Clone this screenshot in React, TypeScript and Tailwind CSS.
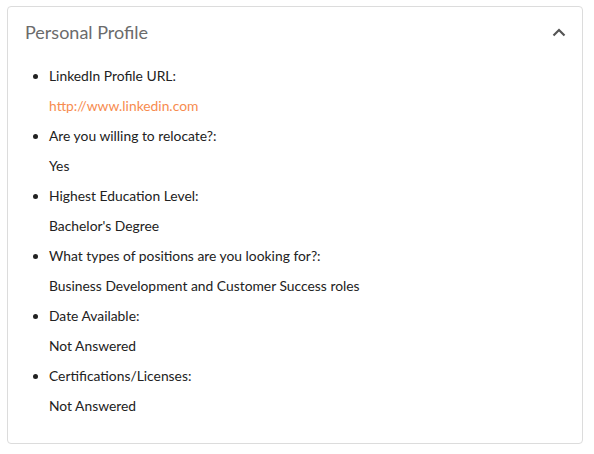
import React, { useState } from 'react';

const items: { label: string; value: string; link?: boolean }[] = [
  { label: 'LinkedIn Profile URL:', value: 'http://www.linkedin.com', link: true },
  { label: 'Are you willing to relocate?:', value: 'Yes' },
  { label: 'Highest Education Level:', value: "Bachelor's Degree" },
  { label: 'What types of positions are you looking for?:', value: 'Business Development and Customer Success roles' },
  { label: 'Date Available:', value: 'Not Answered' },
  { label: 'Certifications/Licenses:', value: 'Not Answered' },
];

const App: React.FC = () => {
  const [open, setOpen] = useState(true);

  return (
    <div className="min-h-screen bg-white pt-[6px] pl-[7px] pr-[11px] font-['Lato','Liberation_Sans',sans-serif]">
      <div className="rounded-[4px] border border-[#dcdcdc] bg-white">
        {/* Header */}
        <div className="flex items-center justify-between pl-[17px] pr-[16px] pt-[13px]">
          <h2 className="text-[18px] leading-[24px] text-[#6b6b6b]">Personal Profile</h2>
          <button onClick={() => setOpen(!open)} className="text-[#555]">
            <svg width="14" height="9" viewBox="0 0 14 9" fill="none">
              <path d="M1.5 7.5L7 2l5.5 5.5" stroke="currentColor" strokeWidth="2.2" />
            </svg>
          </button>
        </div>

        {/* Content */}
        {open && (
          <ul className="pl-[41px] pt-[17px] pb-[22px] text-[13.85px] text-[#222] list-disc">
            {items.map((item) => (
              <li key={item.label} className="marker:text-[#222]">
                <div className="h-[30px] leading-[30px]">{item.label}</div>
                <div className="h-[30px] leading-[30px]">
                  {item.link ? (
                    <a href="#" className="text-[#f78c4f]">{item.value}</a>
                  ) : (
                    item.value
                  )}
                </div>
              </li>
            ))}
          </ul>
        )}
      </div>
    </div>
  );
};

export default App;
